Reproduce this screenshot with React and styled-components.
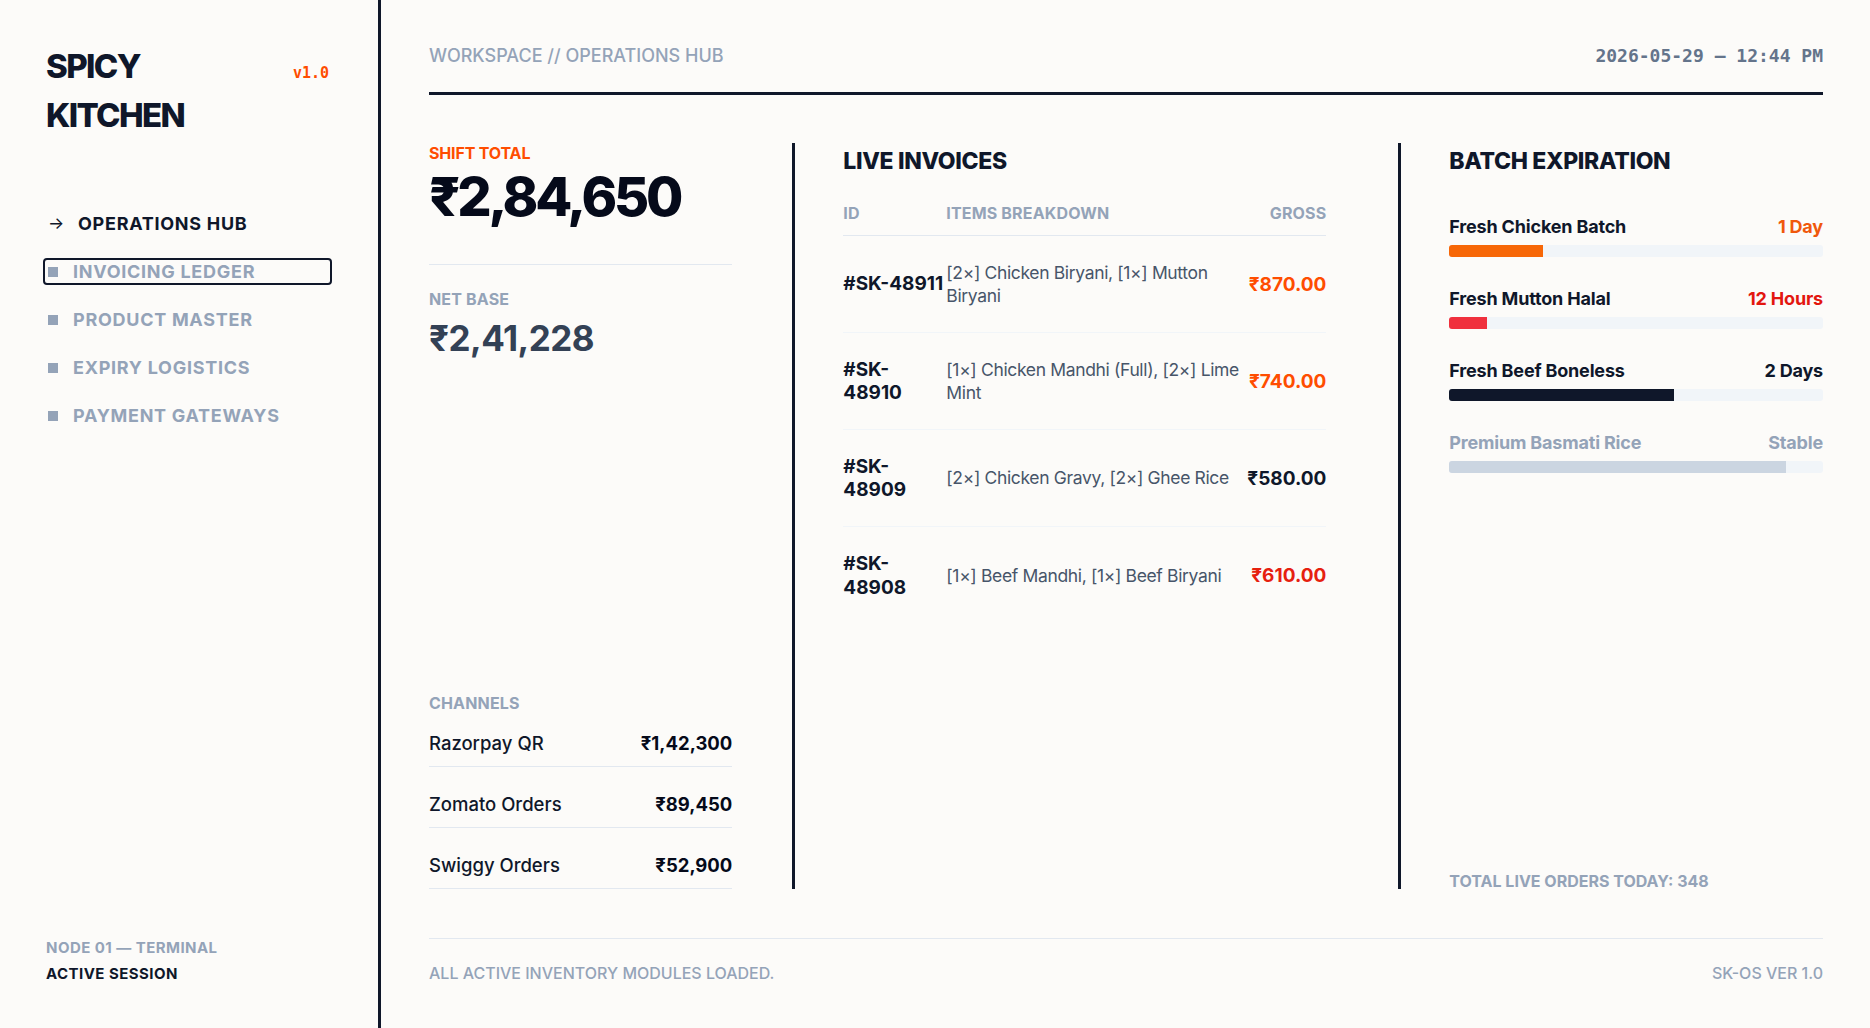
import React from "react";
import styled, { createGlobalStyle } from "styled-components";

const GlobalStyle = createGlobalStyle`
  *, *::before, *::after { box-sizing: border-box; }
  html, body { margin: 0; padding: 0; }
  body {
    background: #fcfbf9;
    color: #0f172a;
    font-family: Inter, "Noto Sans", sans-serif;
    -webkit-font-smoothing: antialiased;
  }
`;

const INK = "#0f172a";
const MUTED = "#94a3b8";

const Shell = styled.div`
  display: flex;
  height: 100vh;
  min-height: 1028px;
`;

/* ---------- sidebar ---------- */

const Sidebar = styled.aside`
  width: 381px;
  flex: none;
  display: flex;
  flex-direction: column;
  padding: 42px 46px 41px;
  border-right: 3px solid ${INK};
`;

const Brand = styled.div`
  display: flex;
  justify-content: space-between;
  align-items: baseline;
`;

const Logo = styled.h1`
  margin: 0;
  font-size: 33px;
  line-height: 49px;
  font-weight: 800;
  letter-spacing: -0.05em;
  color: ${INK};
`;

const Version = styled.span`
  font-family: "DejaVu Sans Mono", "Liberation Mono", monospace;
  font-size: 15px;
  font-weight: 700;
  color: #ff4d00;
  margin-right: 3px;
`;

const Nav = styled.nav`
  margin-top: 70px;
  display: flex;
  flex-direction: column;
  gap: 21px;
`;

const NavItem = styled.a`
  display: flex;
  align-items: center;
  gap: 15px;
  height: 27px;
  margin-left: -3px;
  padding-left: 3px;
  border: 2px solid ${(p) => (p.$focused ? INK : "transparent")};
  border-radius: 4px;
  font-size: 18px;
  font-weight: 700;
  letter-spacing: 0.04em;
  text-decoration: none;
  color: ${(p) => (p.$active ? INK : MUTED)};
  cursor: pointer;
`;

const Arrow = styled.span`
  width: 15px;
  font-size: 17px;
  font-weight: 400;
  letter-spacing: 0;
  line-height: 1;
  color: ${INK};
`;

const Bullet = styled.span`
  width: 10px;
  height: 10px;
  flex: none;
  background: ${MUTED};
`;

const SideFooter = styled.div`
  margin-top: auto;
  display: flex;
  flex-direction: column;
`;

const SideMeta = styled.span`
  font-size: 15px;
  line-height: 26px;
  font-weight: 700;
  letter-spacing: 0.03em;
  color: ${(p) => (p.$strong ? INK : MUTED)};
`;

/* ---------- main area ---------- */

const Main = styled.main`
  flex: 1;
  min-width: 0;
  display: flex;
  flex-direction: column;
  padding: 0 47px 0 48px;
`;

const TopBar = styled.header`
  display: flex;
  justify-content: space-between;
  align-items: baseline;
  padding: 44px 0 25px;
  border-bottom: 3px solid ${INK};
`;

const Crumb = styled.span`
  font-size: 18px;
  line-height: 23px;
  font-weight: 500;
  color: ${MUTED};
`;

const Clock = styled.span`
  font-family: "DejaVu Sans Mono", "Liberation Mono", monospace;
  font-size: 18px;
  font-weight: 700;
  color: #64748b;
`;

const Board = styled.section`
  flex: 1;
  min-height: 0;
  margin-top: 48px;
  display: grid;
  grid-template-columns: 1fr 1.8fr 1.4fr;
  column-gap: 60px;
`;

const Column = styled.div`
  display: flex;
  flex-direction: column;
  min-width: 0;
  ${(p) =>
    p.$ruled &&
    `
    border-left: 3px solid ${INK};
    padding-left: 48px;
  `}
  padding-right: ${(p) => p.$padRight || 0}px;
  justify-content: ${(p) => (p.$split ? "space-between" : "flex-start")};
`;

const Label = styled.div`
  font-size: 16px;
  line-height: 20px;
  font-weight: 700;
  letter-spacing: ${(p) => (p.$tight ? "-0.01em" : "0.01em")};
  color: ${(p) => p.$color || MUTED};
`;

const BigFigure = styled.div`
  margin-top: 7px;
  font-size: 54px;
  line-height: 54px;
  font-weight: 800;
  letter-spacing: -0.06em;
  color: #050a1a;
`;

const Rule = styled.hr`
  margin: 40px 0 24px;
  border: 0;
  height: 1px;
  background: #e2e8f0;
`;

const MidFigure = styled.div`
  margin-top: 12px;
  font-size: 35px;
  line-height: 35px;
  font-weight: 700;
  letter-spacing: -0.015em;
  color: #334155;
`;

const Channels = styled.div`
  display: flex;
  flex-direction: column;
`;

const ChannelList = styled.div`
  margin-top: 6px;
  display: flex;
  flex-direction: column;
  gap: 13px;
`;

const ChannelRow = styled.div`
  display: flex;
  justify-content: space-between;
  align-items: baseline;
  padding: 12px 0 11px;
  border-bottom: 1px solid #e2e8f0;
  font-size: 18.5px;
  line-height: 24px;
`;

const ChannelName = styled.span`
  font-weight: 500;
  color: ${INK};
`;

const ChannelAmount = styled.span`
  font-weight: 700;
  color: #050a1a;
`;

const Heading = styled.h2`
  margin: 0;
  font-size: 23px;
  line-height: 36px;
  font-weight: 800;
  letter-spacing: -0.015em;
  color: ${INK};
`;

/* invoices */

const Ledger = styled.div`
  margin-top: 24px;
  display: flex;
  flex-direction: column;
`;

const LedgerRow = styled.div`
  display: grid;
  grid-template-columns: 103px 1fr 86px;
  align-items: center;
  ${(p) =>
    p.$head
      ? `
    padding-bottom: 12px;
    border-bottom: 1px solid #e2e8f0;
  `
      : `
    min-height: 97px;
    border-bottom: 1px solid #f1f5f9;
    &:last-child { border-bottom: 0; }
  `}
`;

const HeadCell = styled.span`
  font-size: 16px;
  line-height: 20px;
  font-weight: 700;
  letter-spacing: 0.01em;
  color: ${MUTED};
  text-align: ${(p) => (p.$right ? "right" : "left")};
`;

const InvoiceId = styled.span`
  font-size: 19px;
  line-height: 23.5px;
  font-weight: 700;
  color: ${INK};
`;

const Items = styled.span`
  font-size: 17.5px;
  line-height: 23.5px;
  font-weight: 400;
  color: #475569;
  letter-spacing: -0.02em;
`;

const Gross = styled.span`
  font-size: 19px;
  font-weight: 700;
  text-align: right;
  white-space: nowrap;
  color: ${(p) => p.$color};
`;

/* batches */

const Batches = styled.div`
  margin-top: 37px;
  display: flex;
  flex-direction: column;
  gap: 31px;
`;

const Batch = styled.div`
  display: flex;
  flex-direction: column;
  gap: 7px;
`;

const BatchLine = styled.div`
  display: flex;
  justify-content: space-between;
  align-items: baseline;
  font-size: 18px;
  line-height: 22px;
  font-weight: 700;
  letter-spacing: -0.01em;
  color: ${(p) => (p.$dim ? MUTED : INK)};
`;

const BatchState = styled.span`
  color: ${(p) => p.$color};
`;

const Track = styled.div`
  height: 12px;
  border-radius: 3px;
  background: #f1f5f9;
  overflow: hidden;
`;

const Fill = styled.div`
  height: 100%;
  width: ${(p) => p.$pct}%;
  background: ${(p) => p.$color};
`;

const Tally = styled.div`
  margin-top: auto;
  font-size: 16px;
  line-height: 16px;
  font-weight: 700;
  color: ${MUTED};
`;

const Footer = styled.footer`
  margin-top: 49px;
  display: flex;
  justify-content: space-between;
  padding: 24px 0 45px;
  border-top: 1px solid #e2e8f0;
  font-size: 16px;
  line-height: 20px;
  font-weight: 500;
  color: ${MUTED};
`;

const NAV = [
  { label: "OPERATIONS HUB", active: true },
  { label: "INVOICING LEDGER", focused: true },
  { label: "PRODUCT MASTER" },
  { label: "EXPIRY LOGISTICS" },
  { label: "PAYMENT GATEWAYS" },
];

const CHANNELS = [
  { name: "Razorpay QR", amount: "₹1,42,300" },
  { name: "Zomato Orders", amount: "₹89,450" },
  { name: "Swiggy Orders", amount: "₹52,900" },
];

const INVOICES = [
  { id: "#SK-48911", items: "[2×] Chicken Biryani, [1×] Mutton Biryani", gross: "₹870.00", color: "#ff4d00" },
  { id: "#SK-48910", items: "[1×] Chicken Mandhi (Full), [2×] Lime Mint", gross: "₹740.00", color: "#ff4d00" },
  { id: "#SK-48909", items: "[2×] Chicken Gravy, [2×] Ghee Rice", gross: "₹580.00", color: "#0f172a" },
  { id: "#SK-48908", items: "[1×] Beef Mandhi, [1×] Beef Biryani", gross: "₹610.00", color: "#e6200f" },
];

const BATCHES = [
  { name: "Fresh Chicken Batch", state: "1 Day", stateColor: "#f0580c", pct: 25, fill: "#f76707" },
  { name: "Fresh Mutton Halal", state: "12 Hours", stateColor: "#e3160f", pct: 10, fill: "#f0303d" },
  { name: "Fresh Beef Boneless", state: "2 Days", stateColor: INK, pct: 60, fill: INK },
  { name: "Premium Basmati Rice", state: "Stable", stateColor: MUTED, pct: 90, fill: "#cbd5e1", dim: true },
];

export default function App() {
  return (
    <>
      <GlobalStyle />
      <Shell>
        <Sidebar>
          <Brand>
            <Logo>
              SPICY
              <br />
              KITCHEN
            </Logo>
            <Version>v1.0</Version>
          </Brand>

          <Nav>
            {NAV.map((item) => (
              <NavItem key={item.label} $active={item.active} $focused={item.focused}>
                {item.active ? <Arrow>→</Arrow> : <Bullet />}
                {item.label}
              </NavItem>
            ))}
          </Nav>

          <SideFooter>
            <SideMeta>NODE 01 — TERMINAL</SideMeta>
            <SideMeta $strong>ACTIVE SESSION</SideMeta>
          </SideFooter>
        </Sidebar>

        <Main>
          <TopBar>
            <Crumb>WORKSPACE // OPERATIONS HUB</Crumb>
            <Clock>2026-05-29 — 12:44 PM</Clock>
          </TopBar>

          <Board>
            <Column $split>
              <div>
                <Label $color="#ff4d00" $tight>SHIFT TOTAL</Label>
                <BigFigure>₹2,84,650</BigFigure>
                <Rule />
                <Label>NET BASE</Label>
                <MidFigure>₹2,41,228</MidFigure>
              </div>
              <Channels>
                <Label>CHANNELS</Label>
                <ChannelList>
                  {CHANNELS.map((c) => (
                    <ChannelRow key={c.name}>
                      <ChannelName>{c.name}</ChannelName>
                      <ChannelAmount>{c.amount}</ChannelAmount>
                    </ChannelRow>
                  ))}
                </ChannelList>
              </Channels>
            </Column>

            <Column $ruled $padRight={12}>
              <Heading>LIVE INVOICES</Heading>
              <Ledger>
                <LedgerRow $head>
                  <HeadCell>ID</HeadCell>
                  <HeadCell>ITEMS BREAKDOWN</HeadCell>
                  <HeadCell $right>GROSS</HeadCell>
                </LedgerRow>
                {INVOICES.map((inv) => (
                  <LedgerRow key={inv.id}>
                    <InvoiceId>{inv.id}</InvoiceId>
                    <Items>{inv.items}</Items>
                    <Gross $color={inv.color}>{inv.gross}</Gross>
                  </LedgerRow>
                ))}
              </Ledger>
            </Column>

            <Column $ruled>
              <Heading>BATCH EXPIRATION</Heading>
              <Batches>
                {BATCHES.map((b) => (
                  <Batch key={b.name}>
                    <BatchLine $dim={b.dim}>
                      <span>{b.name}</span>
                      <BatchState $color={b.stateColor}>{b.state}</BatchState>
                    </BatchLine>
                    <Track>
                      <Fill $pct={b.pct} $color={b.fill} />
                    </Track>
                  </Batch>
                ))}
              </Batches>
              <Tally>TOTAL LIVE ORDERS TODAY: 348</Tally>
            </Column>
          </Board>

          <Footer>
            <span>ALL ACTIVE INVENTORY MODULES LOADED.</span>
            <span>SK-OS VER 1.0</span>
          </Footer>
        </Main>
      </Shell>
    </>
  );
}
